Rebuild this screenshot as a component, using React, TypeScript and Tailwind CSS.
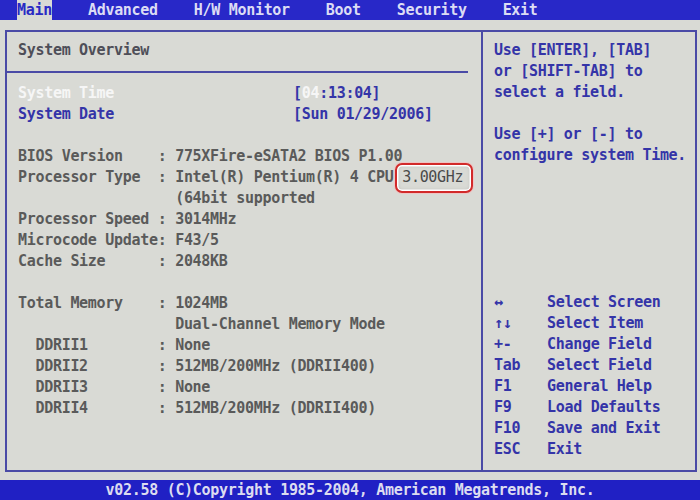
import React from 'react';

const menu = ['Main', 'Advanced', 'H/W Monitor', 'Boot', 'Security', 'Exit'];

const info: [string, string][] = [
  ['BIOS Version    : ', '775XFire-eSATA2 BIOS P1.00'],
  ['Processor Type  : ', 'Intel(R) Pentium(R) 4 CPU '],
  ['                  ', '(64bit supported'],
  ['Processor Speed : ', '3014MHz'],
  ['Microcode Update: ', 'F43/5'],
  ['Cache Size      : ', '2048KB'],
];

const memory: [string, string][] = [
  ['Total Memory    : ', '1024MB'],
  ['                  ', 'Dual-Channel Memory Mode'],
  ['  DDRII1        : ', 'None'],
  ['  DDRII2        : ', '512MB/200MHz (DDRII400)'],
  ['  DDRII3        : ', 'None'],
  ['  DDRII4        : ', '512MB/200MHz (DDRII400)'],
];

const keys: [string, string][] = [
  ['↔', 'Select Screen'],
  ['↑↓', 'Select Item'],
  ['+-', 'Change Field'],
  ['Tab', 'Select Field'],
  ['F1', 'General Help'],
  ['F9', 'Load Defaults'],
  ['F10', 'Save and Exit'],
  ['ESC', 'Exit'],
];

function Line({ label, value, highlight }: { label: string; value: string; highlight?: boolean }) {
  return (
    <div className="h-[21px] flex whitespace-pre text-[#5a5a5a]">
      <span>{label}</span>
      <span>{value}</span>
      {highlight && (
        <span className="relative h-[21px] font-normal text-[#4a4a4a]">
          3.00GHz
          <span className="absolute -left-[7px] -right-[10px] -top-[4px] -bottom-[5px] rounded-[7px] border-2 border-[#d22a2a] shadow-[0_0_0_1px_#efc4c4,inset_0_0_0_1.5px_#ffffff,inset_0_0_3px_2px_#c8c8c4]" />
        </span>
      )}
    </div>
  );
}

export default function App() {
  return (
    <div className="w-[700px] h-[500px] bg-[#d9dad5] flex flex-col font-['DejaVu_Sans_Mono',monospace] text-[15px] leading-[21px] tracking-[-0.3px] font-bold">
      <div className="h-5 shrink-0 bg-[#2828c8] flex items-stretch pl-[17px] gap-[36px] text-[#dcdcf4] leading-5">
        {menu.map(m => (
          <span key={m} className={m === 'Main' ? 'bg-[#d9dad5] text-[#2a2ac4]' : ''}>
            {m}
          </span>
        ))}
      </div>

      <div className="flex-1 pl-[5px] pr-[3px] pt-[10px] pb-[8px]">
        <div className="h-full border-2 border-[#4a4aa6] flex">
          {/* left panel */}
          <div className="w-[476px] border-r-2 border-[#4a4aa6] pl-[11px] pt-[8px]">
            <div className="h-[21px] text-[#4e4e58]">System Overview</div>
            <div className="h-[21px] -ml-[11px] flex items-center">
              <div className="w-[461px] h-[2px] bg-[#4a4aa6]" />
            </div>
            <div className="h-[21px] flex mt-px">
              <span className="w-[275px] text-[#f6f6f6]">System Time</span>
              <span className="text-[#3434a8]">
                [<span className="text-[#f6f6f6]">04</span>:13:04]
              </span>
            </div>
            <div className="h-[21px] flex text-[#3434a8]">
              <span className="w-[275px]">System Date</span>
              <span>[Sun 01/29/2006]</span>
            </div>
            <div className="h-[21px]" />
            {info.map(([l, v], i) => (
              <Line key={i} label={l} value={v} highlight={i === 1} />
            ))}
            <div className="h-[21px]" />
            {memory.map(([l, v], i) => (
              <Line key={i} label={l} value={v} />
            ))}
          </div>

          {/* help panel */}
          <div className="flex-1 pl-[11px] pt-[8px] pb-[10px] flex flex-col text-[#3434a8]">
            <div>Use [ENTER], [TAB]</div>
            <div>or [SHIFT-TAB] to</div>
            <div>select a field.</div>
            <div className="h-[21px]" />
            <div>Use [+] or [-] to</div>
            <div className="whitespace-pre">configure system Time.</div>
            <div className="mt-auto">
              {keys.map(([k, d]) => (
                <div key={k} className="h-[21px] flex">
                  <span className="w-[53px]">{k}</span>
                  <span>{d}</span>
                </div>
              ))}
            </div>
          </div>
        </div>
      </div>

      <div className="h-5 shrink-0 bg-[#2020c4] text-[#dcdcf0] leading-5 text-center whitespace-pre">
        v02.58 (C)Copyright 1985-2004, American Megatrends, Inc.
      </div>
    </div>
  );
}
